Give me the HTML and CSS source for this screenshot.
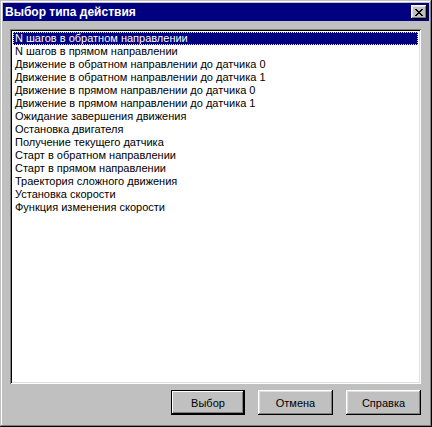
FILE: index.html
```html
<!DOCTYPE html>
<html lang="ru">
<head>
    <meta charset="UTF-8">
    <title>Выбор типа действия</title>
    <link rel="stylesheet" href="styles.css">
</head>
<body>
    <div class="window">
        <div class="titlebar">
            <span class="title">Выбор типа действия</span>
            <button class="close_btn">
                <svg width="8" height="7" viewBox="0 0 8 7">
                    <path d="M0 0h2v1h1v1h2v-1h1v-1h2v1h-1v1h-1v1h-1v1h1v1h1v1h1v1h-2v-1h-1v-1h-2v1h-1v1h-2v-1h1v-1h1v-1h1v-1h-1v-1h-1v-1h-1z" fill="#000"/>
                </svg>
            </button>
        </div>
        <div class="content">
            <div class="listbox">
                <div class="item selected">N шагов в обратном направлении</div>
                <div class="item">N шагов в прямом направлении</div>
                <div class="item">Движение в обратном направлении до датчика 0</div>
                <div class="item">Движение в обратном направлении до датчика 1</div>
                <div class="item">Движение в прямом направлении до датчика 0</div>
                <div class="item">Движение в прямом направлении до датчика 1</div>
                <div class="item">Ожидание завершения движения</div>
                <div class="item">Остановка двигателя</div>
                <div class="item">Получение текущего датчика</div>
                <div class="item">Старт в обратном направлении</div>
                <div class="item">Старт в прямом направлении</div>
                <div class="item">Траектория сложного движения</div>
                <div class="item">Установка скорости</div>
                <div class="item">Функция изменения скорости</div>
            </div>
            <div class="buttons">
                <button class="btn default">Выбор</button>
                <button class="btn">Отмена</button>
                <button class="btn">Справка</button>
            </div>
        </div>
    </div>
</body>
</html>
```

FILE: styles.css
```css
*{
    margin: 0;
    padding: 0;
    box-sizing: border-box;
}
body{
    background: #c0c0c0;
    font-family: "Liberation Sans", Arial, sans-serif;
    font-size: 11px;
}
.window{
    width: 432px;
    height: 427px;
    background: #c0c0c0;
    padding: 3px;
    box-shadow: inset -1px -1px #000, inset 1px 1px #c0c0c0, inset -2px -2px #808080, inset 2px 2px #fff;
}
.titlebar{
    height: 18px;
    background: #000080;
    color: #fff;
    display: flex;
    align-items: center;
    justify-content: space-between;
    padding: 0 2px 0 2px;
}
.title{
    font-weight: bold;
    font-size: 12px;
}
.close_btn{
    width: 16px;
    height: 14px;
    background: #c0c0c0;
    border: none;
    display: flex;
    align-items: center;
    justify-content: center;
    box-shadow: inset -1px -1px #000, inset 1px 1px #fff, inset -2px -2px #808080, inset 2px 2px #dfdfdf;
}
.content{
    padding: 8px 7px 0 7px;
}
.listbox{
    width: 411px;
    height: 355px;
    background: #fff;
    padding: 3px 3px;
    box-shadow: inset 1px 1px #808080, inset -1px -1px #fff, inset 2px 2px #000, inset -2px -2px #dfdfdf;
}
.item{
    height: 13px;
    line-height: 13px;
    padding-left: 2px;
    color: #000;
    white-space: nowrap;
}
.item.selected{
    background: #000080;
    color: #fff;
    outline: 1px dotted #ffff00;
    outline-offset: -1px;
}
.buttons{
    display: flex;
    justify-content: flex-end;
    gap: 13px;
    margin-top: 6px;
    padding-right: 1px;
}
.btn{
    width: 75px;
    height: 25px;
    background: #c0c0c0;
    border: none;
    font-family: "Liberation Sans", Arial, sans-serif;
    font-size: 11px;
    color: #000;
    box-shadow: inset -1px -1px #000, inset 1px 1px #fff, inset -2px -2px #808080, inset 2px 2px #dfdfdf;
}
.btn.default{
    width: 74px;
    border: 1px solid #000;
    box-shadow: inset -1px -1px #000, inset 1px 1px #fff, inset -2px -2px #808080;
}
```
